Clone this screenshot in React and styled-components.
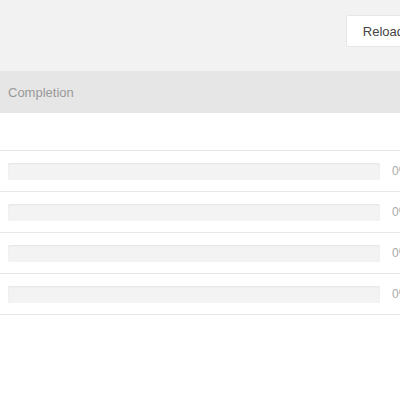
import styled, { createGlobalStyle } from "styled-components";

const Global = createGlobalStyle`
  html, body {
    margin: 0;
    padding: 0;
    overflow: hidden;
    background: #fff;
    font-family: "Liberation Sans", Arial, sans-serif;
  }
`;

const Page = styled.div`
  width: 440px;
`;

const Toolbar = styled.div`
  height: 71px;
  background: #f2f2f2;
  display: flex;
  justify-content: flex-end;
  align-items: flex-start;
  padding: 15px 19px 0 0;
  box-sizing: border-box;
`;

const Button = styled.button`
  height: 32px;
  padding: 0 16px;
  background: #fff;
  border: 1px solid #e6e6e6;
  border-radius: 2px;
  font-family: inherit;
  font-size: 13px;
  color: #444;
`;

const Header = styled.div`
  height: 42px;
  background: #e6e6e6;
  display: flex;
  align-items: center;
  padding-left: 8px;
  font-size: 13px;
  color: #999;
`;

const Spacer = styled.div`
  height: 37px;
  border-bottom: 1px solid #e8e8e8;
`;

const Row = styled.div`
  height: 40px;
  border-bottom: 1px solid #e8e8e8;
  display: flex;
  align-items: center;
  padding-left: 8px;
`;

const Track = styled.div`
  width: 372px;
  height: 17px;
  background: #f3f3f3;
  border-radius: 2px;
  box-shadow: inset 0 1px 2px rgba(0, 0, 0, 0.06);
  overflow: hidden;
`;

const Fill = styled.div`
  height: 100%;
  background: #5cb85c;
`;

const Pct = styled.span`
  margin-left: 12px;
  font-size: 12px;
  color: #aaa;
`;

const rows = [0, 0, 0, 0];

export default function App() {
  return (
    <Page>
      <Global />
      <Toolbar>
        <Button>Reload</Button>
      </Toolbar>
      <Header>Completion</Header>
      <Spacer />
      {rows.map((v, i) => (
        <Row key={i}>
          <Track>
            <Fill style={{ width: `${v}%` }} />
          </Track>
          <Pct>{v}%</Pct>
        </Row>
      ))}
    </Page>
  );
}
